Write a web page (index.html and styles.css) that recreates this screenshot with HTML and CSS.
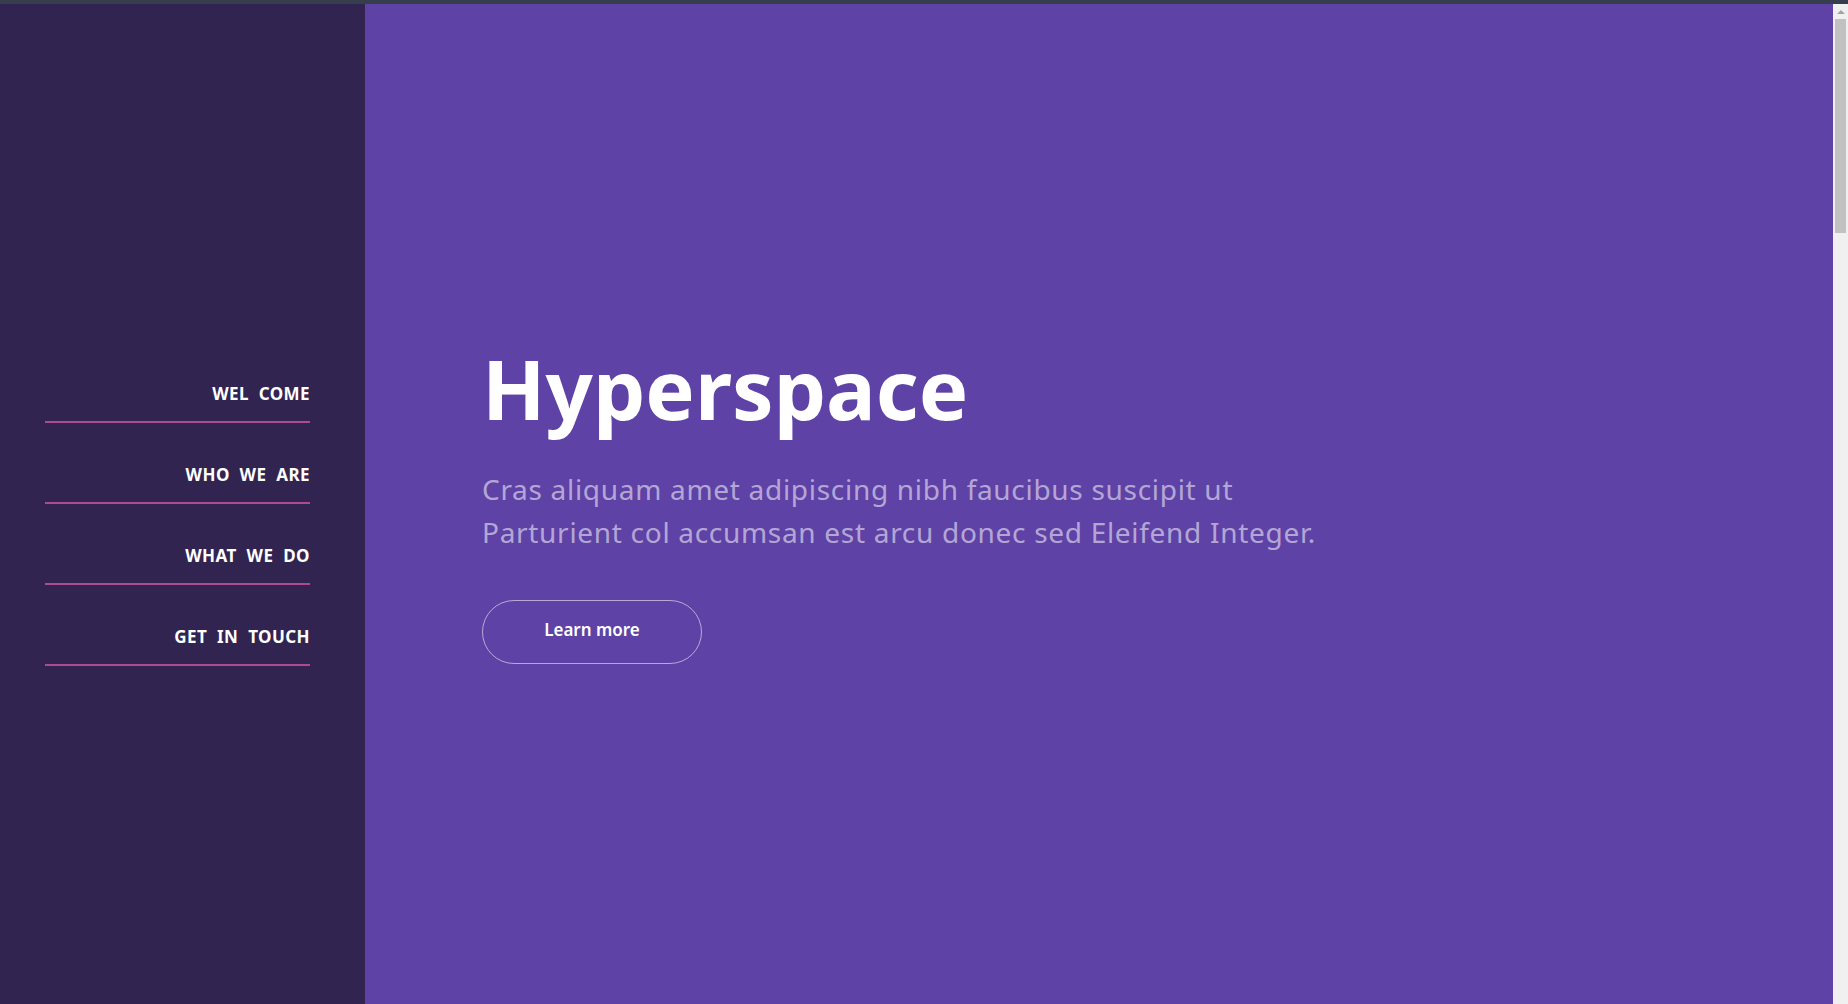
FILE: index.html
```html
<!DOCTYPE html>
<html lang="en">
<head>
<meta charset="utf-8">
<title>Hyperspace</title>
<link rel="stylesheet" href="styles.css">
</head>
<body>
<div class="topbar"></div>
<div class="app">
  <aside class="sidebar">
    <nav class="nav">
      <a class="nav-link" href="#intro">Wel come</a>
      <a class="nav-link" href="#one">Who we are</a>
      <a class="nav-link" href="#two">What we do</a>
      <a class="nav-link" href="#three">Get in touch</a>
    </nav>
  </aside>
  <main class="main">
    <section class="hero" id="intro">
      <h1 class="hero-title">Hyperspace</h1>
      <p class="hero-text">Cras aliquam amet adipiscing nibh faucibus suscipit ut<br>Parturient col accumsan est arcu donec sed Eleifend Integer.</p>
      <a class="button" href="#one">Learn more</a>
    </section>
  </main>
  <div class="scrollbar" aria-hidden="true">
    <div class="scroll-arrow"><span class="scroll-tri"></span></div>
    <div class="scroll-thumb"></div>
  </div>
</div>
</body>
</html>
```
FILE: styles.css
```css
html, body {
  margin: 0;
  padding: 0;
  height: 100%;
  overflow: hidden;
}
body {
  font-family: "Noto Sans", "Open Sans", "DejaVu Sans", sans-serif;
  background: #312450;
  color: #fff;
}
.topbar {
  height: 4px;
  background: #363e4e;
}
.app {
  display: flex;
  height: 1000px;
}
.sidebar {
  flex: 0 0 365px;
  background: #312450;
  display: flex;
  flex-direction: column;
  justify-content: center;
  padding: 0 55px 0 45px;
  box-sizing: border-box;
}
.nav {
  display: flex;
  flex-direction: column;
}
.nav-link {
  display: block;
  text-align: right;
  color: #fff;
  text-decoration: none;
  text-transform: uppercase;
  font-weight: 700;
  font-size: 17px;
  line-height: 25px;
  letter-spacing: 0.025em;
  word-spacing: 5px;
  padding: 39px 0 15px;
  border-bottom: 2px solid #ac4a98;
}
.main {
  flex: 1 1 auto;
  background: #5e42a6;
  overflow: hidden;
}
.hero {
  box-sizing: border-box;
  padding: 338px 0 0 117px;
}
.hero-title {
  margin: 0;
  font-size: 83px;
  line-height: 92px;
  font-weight: 700;
  color: #fff;
}
.hero-text {
  margin: 34px 0 0;
  font-size: 28px;
  line-height: 43px;
  letter-spacing: 0.7px;
  color: rgba(255, 255, 255, 0.55);
}
.button {
  display: inline-block;
  margin-top: 46px;
  width: 220px;
  height: 64px;
  box-sizing: border-box;
  border: 1px solid rgba(255, 255, 255, 0.55);
  border-radius: 32px;
  text-align: center;
  color: #fff;
  text-decoration: none;
  font-size: 17px;
  font-weight: 600;
  line-height: 58px;
  padding-bottom: 4px;
}
.scrollbar {
  flex: 0 0 15px;
  background: #f0f0f0;
  display: flex;
  flex-direction: column;
  align-items: center;
}
.scroll-arrow {
  height: 15px;
  width: 15px;
  display: flex;
  justify-content: center;
  padding-top: 6px;
  box-sizing: border-box;
}
.scroll-tri {
  width: 0;
  height: 0;
  border-left: 4px solid transparent;
  border-right: 4px solid transparent;
  border-bottom: 4px solid #a3a3a3;
}
.scroll-thumb {
  width: 11px;
  height: 214px;
  background: #c1c1c1;
}
```
